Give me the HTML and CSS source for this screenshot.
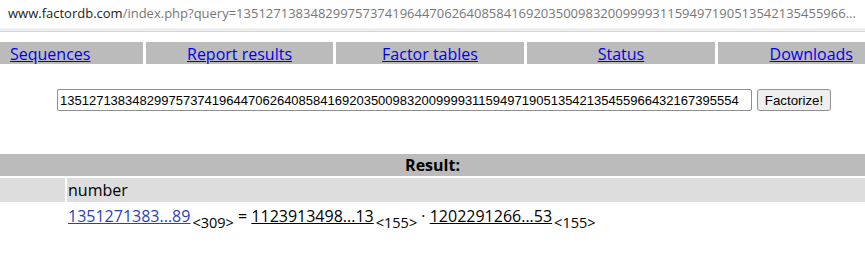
FILE: index.html
```html
<!DOCTYPE html>
<html lang="en">
<head>
    <meta charset="UTF-8">
    <title>factordb.com</title>
    <link rel="stylesheet" href="styles.css">
</head>
<body>
    <!-- address bar -->
    <div class="addr"><span class="host">www.factordb.com</span>/index.php?query=1351271383482997573741964470626408584169203500983200999931159497190513542135455966...</div>
    <div class="addr-line"></div>

    <!-- navigation -->
    <div class="nav">
        <div class="nav-cell left"><a href="#">Sequences</a></div>
        <div class="nav-cell"><a href="#">Report results</a></div>
        <div class="nav-cell"><a href="#">Factor tables</a></div>
        <div class="nav-cell"><a href="#">Status</a></div>
        <div class="nav-cell right"><a href="#">Downloads</a></div>
    </div>

    <!-- query form -->
    <form class="query">
        <input class="query-input" type="text" value="1351271383482997573741964470626408584169203500983200999931159497190513542135455966432167395554">
        <button class="query-btn" type="button">Factorize!</button>
    </form>

    <!-- result -->
    <div class="result-head">Result:</div>
    <div class="result-row head">
        <div class="col-status"></div>
        <div class="col-num">number</div>
    </div>
    <div class="result-row">
        <div class="col-status"></div>
        <div class="col-num">
            <a class="num-link" href="#">1351271383...89</a><sub>&lt;309&gt;</sub> = <a class="fac" href="#">1123913498...13</a><sub>&lt;155&gt;</sub> &middot; <a class="fac" href="#">1202291266...53</a><sub>&lt;155&gt;</sub>
        </div>
    </div>
</body>
</html>
```

FILE: styles.css
```css
*{
    margin: 0;
    padding: 0;
}

body{
    font-family: "Open Sans", "Noto Sans", sans-serif;
    font-size: 16px;
    color: #000;
    background-color: #fff;
}

/*地址栏*/
.addr{
    height: 28px;
    line-height: 26px;
    padding-left: 8px;
    font-size: 13px;
    color: #777;
    white-space: nowrap;
}
.addr .host{
    color: #222;
}
.addr-line{
    height: 3px;
    background-color: #efefef;
    border-bottom: 1px solid #d6d6d6;
}

/*导航*/
.nav{
    display: grid;
    grid-template-columns: 143px 187px 188px 188px 1fr;
    column-gap: 3px;
    margin-top: 10px;
}
.nav-cell{
    height: 22px;
    line-height: 25px;
    background-color: #bbb;
    text-align: center;
    font-size: 16px;
}
.nav-cell.left{
    text-align: left;
    padding-left: 10px;
}
.nav-cell.right{
    text-align: right;
    padding-right: 12px;
}
.nav-cell a{
    color: #0000ee;
}

/*输入框*/
.query{
    display: flex;
    gap: 5px;
    padding-left: 57px;
    margin-top: 25px;
}
.query-input{
    width: 695px;
    height: 22px;
    box-sizing: border-box;
    padding: 0 2px;
    font-family: "Liberation Sans", Arial, sans-serif;
    font-size: 13px;
    border: 1px solid #8f8f8f;
    border-radius: 2px;
    color: #000;
}
.query-btn{
    width: 74px;
    height: 22px;
    font-family: "Liberation Sans", Arial, sans-serif;
    font-size: 13.3px;
    background-color: #efefef;
    border: 1px solid #8f8f8f;
    border-radius: 3px;
    color: #000;
}

/*结果*/
.result-head{
    margin-top: 43px;
    height: 22px;
    line-height: 22px;
    background-color: #bbb;
    text-align: center;
    font-weight: bold;
}
.result-row{
    display: grid;
    grid-template-columns: 65px 1fr;
    column-gap: 2px;
    margin-top: 2px;
}
.result-row > div{
    height: 24px;
    line-height: 24px;
    white-space: nowrap;
}
.result-row.head > div{
    background-color: #ddd;
}
.col-num{
    padding-left: 1px;
}
.num-link{
    color: #2b3ebd;
}
.fac{
    color: #000;
}
sub{
    font-size: 14.5px;
    vertical-align: -6px;
    line-height: 0;
    margin-left: 2px;
}
```
